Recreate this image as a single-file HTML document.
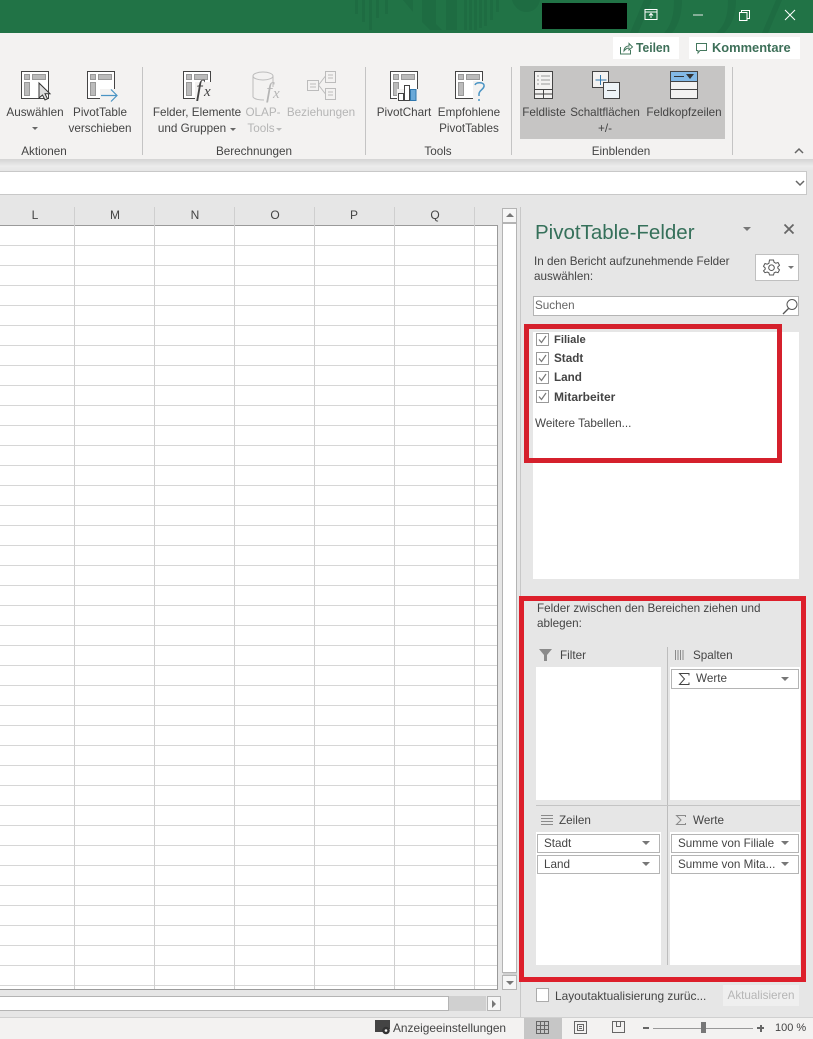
<!DOCTYPE html>
<html lang="de"><head><meta charset="utf-8"><title>PivotTable-Felder</title>
<style>
html,body{margin:0;padding:0}
body{width:813px;height:1039px;position:relative;overflow:hidden;background:#e6e6e6;font-family:"Liberation Sans",sans-serif;color:#444}
div,svg,span.t{position:absolute}
.t{white-space:nowrap;font-size:11.7px;line-height:14px;color:#444}
.c{transform:translateX(-50%)}
.dis{color:#b5b5b5}
.g{font-size:11.7px}
.f{background:#fff;border:1px solid #b4b4b4;box-sizing:border-box}
.tri{width:0;height:0;border-left:4px solid transparent;border-right:4px solid transparent;border-top:4px solid #777}
.w{background:#fff}
svg{overflow:visible}
</style></head><body>

<!-- title bar -->
<div style="left:0;top:0;width:813px;height:33px;background:#217346"></div>
<svg style="left:0;top:0" width="813" height="33" fill="#1e6c42">
<rect x="355" y="0" width="3" height="14"/><rect x="362" y="0" width="3" height="22"/><rect x="369" y="0" width="3" height="30"/><rect x="376" y="0" width="3" height="18"/><rect x="385" y="0" width="3" height="14"/>
<path d="M403 0l10 12V0zM422 0h14v24l6 6h-12l-8-8zM446 0h11v30h-11z"/>
<rect x="464" y="0" width="3" height="30"/><rect x="469" y="0" width="3" height="30"/><rect x="474" y="0" width="3" height="30"/><rect x="479" y="0" width="3" height="28"/><rect x="484" y="0" width="3" height="26"/><rect x="490" y="0" width="3" height="20"/><rect x="496" y="0" width="3" height="12"/>
<path d="M512 0h28c-2 9-8 12-14 12s-12-5-14-12zM630 33l14-33h8l-14 33zM664 33c8-8 10-20 10-33h8c0 13-3 25-10 33zM716 33c10-8 12-20 12-33h8c0 14-4 25-12 33zM762 33l14-33h6l-14 33z"/></svg>
<div style="left:542px;top:3px;width:85px;height:26px;background:#000"></div>
<svg style="left:644px;top:9px" width="14" height="12" fill="none" stroke="#fff"><path d="M1 .5h12v10H1zM1 3h12M7 9V4.500M5 6.500l2-2 2 2"/></svg>
<svg style="left:692px;top:14px" width="12" height="2"><path d="M1 1h10" stroke="#e8e8e8"/></svg>
<svg style="left:739px;top:10px" width="11" height="11" fill="none" stroke="#fff"><path d="M.5 2.500h7.500v8H.5zM2.500 2.500V.5h8v8H8"/></svg>
<svg style="left:784px;top:9px" width="12" height="12" fill="none" stroke="#fff"><path d="M1 1l10 10M11 1L1 11"/></svg>

<!-- ribbon -->
<div style="left:0;top:33px;width:813px;height:126px;background:#f3f2f1"></div>
<div style="left:0;top:159px;width:813px;height:12px;background:linear-gradient(#d4d4d4,#ececec 60%,#e6e6e6)"></div>
<div style="left:520px;top:66px;width:205px;height:73px;background:#c6c5c4"></div>
<div style="left:142px;top:67px;width:1px;height:88px;background:#c4c4c4"></div>
<div style="left:365px;top:67px;width:1px;height:88px;background:#c4c4c4"></div>
<div style="left:511px;top:67px;width:1px;height:88px;background:#c4c4c4"></div>
<div style="left:732px;top:67px;width:1px;height:88px;background:#c4c4c4"></div>

<div class="w" style="left:613px;top:37px;width:66px;height:22px"></div>
<div class="w" style="left:689px;top:37px;width:111px;height:22px"></div>
<svg style="left:620px;top:42px" width="13" height="13" fill="none" stroke="#44785e"><path d="M.5 5v7h10V8M4 9c0-3 2-5 5-5V1.500l3.500 3.500L9 8V6C7 6 5.500 7 4 9z"/></svg>
<span class="t" style="left:636px;top:41px;font-size:13px;font-weight:bold;color:#3d6f58;transform:scaleX(.93);transform-origin:left">Teilen</span>
<svg style="left:696px;top:43px" width="12" height="12" fill="none" stroke="#44785e"><path d="M.5.500h10v7H4L2 10V7.500H.5z"/></svg>
<span class="t" style="left:712px;top:41px;font-size:13px;font-weight:bold;color:#3d6f58;transform:scaleX(.99);transform-origin:left">Kommentare</span>

<!-- ribbon icons -->
<svg style="left:21px;top:71px" width="29" height="30">
<rect x=".5" y=".5" width="27" height="27" fill="#fff" stroke="#444"/><rect x="3.500" y="3.500" width="5" height="5" fill="#bbb" stroke="#999"/><rect x="11.500" y="3.500" width="13" height="5" fill="#bbb" stroke="#999"/><rect x="3.500" y="11.500" width="5" height="13" fill="#bbb" stroke="#999"/>
<path d="M18 12v15l3.500-3 2.500 5 2.500-1.200-2.500-5h5z" fill="#ddd" stroke="#333"/></svg>
<svg style="left:87px;top:71px" width="32" height="30">
<rect x=".5" y=".5" width="27" height="27" fill="#fff" stroke="#444"/><rect x="3.500" y="3.500" width="5" height="5" fill="#bbb" stroke="#999"/><rect x="11.500" y="3.500" width="13" height="5" fill="#bbb" stroke="#999"/><rect x="3.500" y="11.500" width="5" height="13" fill="#bbb" stroke="#999"/>
<rect x="13" y="18" width="18" height="12" fill="#f3f2f1"/><path d="M14 24.500h16M24 18.500l6 6-6 6" fill="none" stroke="#4a94c4" stroke-width="1.200"/></svg>
<svg style="left:183px;top:71px" width="30" height="30">
<rect x=".5" y=".5" width="27" height="27" fill="#fff" stroke="#444"/><rect x="3.500" y="3.500" width="5" height="5" fill="#bbb" stroke="#999"/><rect x="11.500" y="3.500" width="13" height="5" fill="#bbb" stroke="#999"/><rect x="3.500" y="11.500" width="5" height="13" fill="#bbb" stroke="#999"/>
<rect x="12" y="11" width="17" height="18" fill="#f3f2f1"/><text x="13" y="25" font-family="Liberation Serif" font-style="italic" font-size="23" fill="#444">f</text><text x="21" y="25" font-family="Liberation Serif" font-style="italic" font-size="15" fill="#444">x</text></svg>
<svg style="left:252px;top:71px" width="30" height="30">
<path d="M1 5v21c2 3 8 3 11 3M21 5v11" fill="none" stroke="#bcbcbc"/><ellipse cx="11" cy="5" rx="10" ry="4" fill="#f3f2f1" stroke="#bcbcbc"/><text x="14" y="27" font-family="Liberation Serif" font-style="italic" font-size="22" fill="#b5b5b5">f</text><text x="21" y="27" font-family="Liberation Serif" font-style="italic" font-size="15" fill="#b5b5b5">x</text></svg>
<svg style="left:307px;top:71px" width="29" height="29" fill="#f3f2f1" stroke="#bcbcbc">
<rect x=".5" y="9.500" width="11" height="10"/><rect x="18.500" y=".5" width="10" height="11"/><rect x="18.500" y="17.500" width="10" height="11"/><path d="M11.500 14l7-9M11.500 14l7 9M3 13h6M3 16h6M21 4h5M21 7h5M21 21h5M21 24h5" fill="none"/></svg>
<svg style="left:390px;top:71px" width="30" height="30">
<rect x=".5" y=".5" width="27" height="27" fill="#fff" stroke="#444"/><rect x="3.500" y="3.500" width="5" height="5" fill="#bbb" stroke="#999"/><rect x="11.500" y="3.500" width="13" height="5" fill="#bbb" stroke="#999"/><rect x="3.500" y="11.500" width="5" height="13" fill="#bbb" stroke="#999"/>
<rect x="7" y="18" width="22" height="12" fill="#f3f2f1"/><rect x="8.500" y="22.500" width="5" height="7" fill="#fff" stroke="#444"/><rect x="14.500" y="14.500" width="5" height="15" fill="#fff" stroke="#444"/><rect x="20.500" y="18.500" width="5.500" height="11" fill="#6aa9d8" stroke="#2f77ad"/></svg>
<svg style="left:455px;top:71px" width="32" height="32">
<rect x=".5" y=".5" width="27" height="27" fill="#fff" stroke="#444"/><rect x="3.500" y="3.500" width="5" height="5" fill="#bbb" stroke="#999"/><rect x="11.500" y="3.500" width="13" height="5" fill="#bbb" stroke="#999"/><rect x="3.500" y="11.500" width="5" height="13" fill="#bbb" stroke="#999"/>
<rect x="18" y="10" width="12" height="22" fill="#f3f2f1"/><path d="M20 14c1-3 8-3 9 0 1 4-5 5-5 9v2M24 28v2" fill="none" stroke="#4a94c4" stroke-width="1.500"/></svg>
<svg style="left:534px;top:71px" width="20" height="28">
<rect x=".5" y=".5" width="18" height="27" fill="#f3f2f1" stroke="#444"/><path d="M.5 18.500h18M.5 23h18M9.500 18.500v9" stroke="#444"/><path d="M7 5h9M7 9h9M7 13h9" stroke="#999"/><path d="M3 5h2M3 9h2M3 13h2" stroke="#999"/></svg>
<svg style="left:592px;top:71px" width="29" height="29">
<rect x=".5" y=".5" width="16" height="16" fill="#f3f2f1" stroke="#444"/><path d="M8.500 4v10M3.500 9h11" stroke="#2f77ad"/>
<rect x="11.500" y="11.500" width="16" height="16" fill="#eef4f8" stroke="#444"/><path d="M15 19.500h9" stroke="#555"/></svg>
<svg style="left:670px;top:71px" width="29" height="29">
<rect x=".5" y=".5" width="27" height="27" fill="#f3f2f1" stroke="#444"/><rect x="1" y="1" width="26" height="9" fill="#83b9e6"/><path d="M.5 10.500h27M.5 18.500h27" stroke="#444"/><path d="M4 5.500h10" stroke="#333"/><path d="M16 3h8l-4 5z" fill="#333"/></svg>

<!-- ribbon text -->
<span class="t c" style="left:35px;top:106px">Auswählen</span>
<div class="tri" style="left:32px;top:127px;border-width:3px 3px 0;border-top-color:#666"></div>
<span class="t c" style="left:100px;top:106px">PivotTable</span><span class="t c" style="left:100px;top:122px">verschieben</span>
<span class="t c g" style="left:44px;top:145px">Aktionen</span>
<span class="t c" style="left:197px;top:106px">Felder, Elemente</span><span class="t c" style="left:192px;top:122px">und Gruppen</span>
<div class="tri" style="left:230px;top:128px;border-width:3px 3px 0;border-top-color:#666"></div>
<span class="t c dis" style="left:263px;top:106px">OLAP-</span><span class="t c dis" style="left:261px;top:122px">Tools</span>
<div class="tri" style="left:276px;top:128px;border-width:3px 3px 0;border-top-color:#bbb"></div>
<span class="t c dis" style="left:321px;top:106px">Beziehungen</span>
<span class="t c g" style="left:254px;top:145px">Berechnungen</span>
<span class="t c" style="left:404px;top:106px">PivotChart</span>
<span class="t c" style="left:469px;top:106px">Empfohlene</span><span class="t c" style="left:469px;top:122px">PivotTables</span>
<span class="t c g" style="left:438px;top:145px">Tools</span>
<span class="t c" style="left:544px;top:106px">Feldliste</span>
<span class="t c" style="left:605px;top:106px;font-size:11.600px">Schaltflächen</span><span class="t c" style="left:605px;top:122px">+/-</span>
<span class="t c" style="left:684px;top:106px;font-size:11.700px">Feldkopfzeilen</span>
<span class="t c g" style="left:621px;top:145px">Einblenden</span>
<svg style="left:794px;top:148px" width="10" height="6" fill="none" stroke="#666" stroke-width="1.500"><path d="M1 5l4-4 4 4"/></svg>

<!-- formula bar -->
<div style="left:-2px;top:171px;width:809px;height:24px;background:#fff;border:1px solid #c8c8c8;box-sizing:border-box"></div>
<svg style="left:795px;top:180px" width="10" height="6" fill="none" stroke="#666" stroke-width="1.500"><path d="M1 1l4 4 4-4"/></svg>

<!-- sheet -->
<div style="left:0;top:226px;width:498px;height:764px;background-color:#fff;background-image:repeating-linear-gradient(to bottom,transparent 0,transparent 19px,#d6d6d6 19px,#d6d6d6 20px);border-right:1px solid #9a9a9a;border-bottom:1px solid #9a9a9a;box-sizing:border-box"></div>
<div style="left:0;top:207px;width:498px;height:19px;background:#e6e6e6;border-bottom:1px solid #9a9a9a;box-sizing:border-box"></div>
<div style="left:74px;top:207px;width:1px;height:782px;background:#cfcfcf"></div>
<div style="left:154px;top:207px;width:1px;height:782px;background:#cfcfcf"></div>
<div style="left:234px;top:207px;width:1px;height:782px;background:#cfcfcf"></div>
<div style="left:314px;top:207px;width:1px;height:782px;background:#cfcfcf"></div>
<div style="left:394px;top:207px;width:1px;height:782px;background:#cfcfcf"></div>
<div style="left:474px;top:207px;width:1px;height:782px;background:#cfcfcf"></div>
<span class="t c" style="left:35px;top:208px;font-size:12px">L</span>
<span class="t c" style="left:115px;top:208px;font-size:12px">M</span>
<span class="t c" style="left:195px;top:208px;font-size:12px">N</span>
<span class="t c" style="left:275px;top:208px;font-size:12px">O</span>
<span class="t c" style="left:354px;top:208px;font-size:12px">P</span>
<span class="t c" style="left:435px;top:208px;font-size:12px">Q</span>

<!-- vertical scrollbar -->
<div style="left:502px;top:208px;width:15px;height:15px;background:#f6f6f6;border:1px solid #b4b4b4;box-sizing:border-box"></div>
<div style="left:506px;top:213px;width:0;height:0;border-left:4px solid transparent;border-right:4px solid transparent;border-bottom:4px solid #777"></div>
<div style="left:502px;top:223px;width:15px;height:750px;background:#fff;border:1px solid #b4b4b4;box-sizing:border-box"></div>
<div style="left:503px;top:973px;width:14px;height:5px;background:#d0d0d0"></div>
<div style="left:502px;top:975px;width:15px;height:15px;background:#f6f6f6;border:1px solid #b4b4b4;box-sizing:border-box"></div>
<div class="tri" style="left:506px;top:981px"></div>

<!-- horizontal scrollbar -->
<div style="left:0;top:996px;width:449px;height:15px;background:#fff;border:1px solid #b4b4b4;border-left:0;box-sizing:border-box"></div>
<div style="left:449px;top:996px;width:37px;height:15px;background:#d0d0d0"></div>
<div style="left:487px;top:996px;width:14px;height:15px;background:#f6f6f6;border:1px solid #b4b4b4;box-sizing:border-box"></div>
<div style="left:492px;top:1000px;width:0;height:0;border-top:4px solid transparent;border-bottom:4px solid transparent;border-left:4px solid #777"></div>

<!-- panel -->
<div style="left:520px;top:207px;width:1px;height:810px;background:#c8c8c8"></div>
<span class="t" style="left:535px;top:220px;font-size:20.500px;line-height:25px;color:#35705a">PivotTable-Felder</span>
<div class="tri" style="left:743px;top:227px"></div>
<svg style="left:784px;top:224px" width="10" height="10" fill="none" stroke="#666" stroke-width="1.800"><path d="M.5.500l9 9M9.500.5l-9 9"/></svg>
<span class="t" style="left:534px;top:255px">In den Bericht aufzunehmende Felder</span>
<span class="t" style="left:534px;top:270px">auswählen:</span>
<div class="w" style="left:755px;top:254px;width:44px;height:27px;border:1px solid #c0c0c0;box-sizing:border-box"></div>
<svg style="left:763px;top:259px" width="17" height="17" fill="none" stroke="#555"><path d="M6.500 1h4l.6 2.300 1.700.9 2.200-.7 1.500 2.800-1.700 1.700v1.200l1.700 1.700-1.500 2.800-2.200-.7-1.700.9-.6 2.100h-4l-.6-2.100-1.700-.9-2.200.7L.5 11.900l1.700-1.700V9L.5 7.300 2 4.500l2.200.7 1.700-.9z"/><circle cx="8.500" cy="8.700" r="2.800"/></svg>
<div class="tri" style="left:788px;top:266px;border-width:3px 3.500px 0"></div>
<div class="f" style="left:533px;top:296px;width:266px;height:20px"></div>
<span class="t" style="left:535px;top:299px;color:#666">Suchen</span>
<svg style="left:782px;top:298px" width="16" height="17" fill="none" stroke="#555"><circle cx="10" cy="6.500" r="5"/><path d="M6.500 10.500L1 16" stroke-width="1.300"/></svg>

<div class="w" style="left:533px;top:332px;width:266px;height:247px"></div>
<svg style="left:536px;top:333px" width="13" height="70" fill="#fff" stroke="#999">
<rect x=".5" y=".5" width="12" height="12"/><rect x=".5" y="19.500" width="12" height="12"/><rect x=".5" y="38.500" width="12" height="12"/><rect x=".5" y="57.500" width="12" height="12"/>
<g fill="none" stroke="#777" stroke-width="1.200"><path d="M3 6.500l2.500 3L10 3M3 25.500l2.500 3L10 22M3 44.500l2.500 3L10 41M3 63.500l2.500 3L10 60"/></g></svg>
<span class="t" style="left:554px;top:333px;font-weight:bold;font-size:11.200px">Filiale</span>
<span class="t" style="left:554px;top:352px;font-weight:bold">Stadt</span>
<span class="t" style="left:554px;top:371px;font-weight:bold">Land</span>
<span class="t" style="left:554px;top:390px;font-weight:bold;font-size:12px">Mitarbeiter</span>
<span class="t" style="left:535px;top:417px">Weitere Tabellen...</span>
<div style="left:524px;top:324px;width:258px;height:139px;border:5px solid #d5202c;box-sizing:border-box"></div>

<span class="t" style="left:537px;top:602px">Felder zwischen den Bereichen ziehen und</span>
<span class="t" style="left:537px;top:617px">ablegen:</span>
<div style="left:667px;top:647px;width:1px;height:318px;background:#bdbdbd"></div>
<div style="left:536px;top:805px;width:264px;height:1px;background:#c4c4c4"></div>
<svg style="left:539px;top:649px" width="13" height="12" fill="#8a8a8a"><path d="M0 0h13L8 6v6H5V6z"/></svg>
<span class="t" style="left:560px;top:649px">Filter</span>
<svg style="left:675px;top:650px" width="10" height="10" stroke="#8a8a8a"><path d="M.5 0v10M3 0v10M5.500 0v10M8 0v10"/></svg>
<span class="t" style="left:693px;top:649px">Spalten</span>
<svg style="left:541px;top:815px" width="12" height="10" stroke="#8a8a8a"><path d="M0 .5h12M0 3.500h12M0 6.500h12M0 9.500h12"/></svg>
<span class="t" style="left:559px;top:814px">Zeilen</span>
<svg style="left:676px;top:815px" width="10" height="10" fill="none" stroke="#8a8a8a"><path d="M9.500 2V.5h-9L5 5 .5 9.500h9V8"/></svg>
<span class="t" style="left:693px;top:814px">Werte</span>

<div class="w" style="left:536px;top:667px;width:125px;height:133px"></div>
<div class="w" style="left:670px;top:667px;width:130px;height:133px"></div>
<div class="w" style="left:536px;top:832px;width:125px;height:133px"></div>
<div class="w" style="left:670px;top:832px;width:130px;height:133px"></div>

<div class="f" style="left:671px;top:669px;width:128px;height:20px"></div>
<svg style="left:679px;top:673px" width="11" height="12" fill="none" stroke="#444"><path d="M10 2.500V.5H.5L5.500 6 .5 11.500H10V9.500"/></svg>
<span class="t" style="left:696px;top:672px">Werte</span><div class="tri" style="left:781px;top:677px"></div>
<div class="f" style="left:537px;top:834px;width:123px;height:19px"></div>
<span class="t" style="left:544px;top:837px">Stadt</span><div class="tri" style="left:642px;top:841px"></div>
<div class="f" style="left:537px;top:855px;width:123px;height:19px"></div>
<span class="t" style="left:544px;top:858px">Land</span><div class="tri" style="left:642px;top:862px"></div>
<div class="f" style="left:671px;top:834px;width:128px;height:19px"></div>
<span class="t" style="left:678px;top:837px">Summe von Filiale</span><div class="tri" style="left:781px;top:841px"></div>
<div class="f" style="left:671px;top:855px;width:128px;height:19px"></div>
<span class="t" style="left:678px;top:858px">Summe von Mita...</span><div class="tri" style="left:781px;top:862px"></div>

<div style="left:519px;top:596px;width:287px;height:386px;border:5px solid #dd1f2b;box-sizing:border-box"></div>

<div class="w" style="left:536px;top:988px;width:13px;height:14px;border:1px solid #ababab;box-sizing:border-box"></div>
<span class="t" style="left:555px;top:989px;font-size:11.900px">Layoutaktualisierung zurüc...</span>
<div style="left:723px;top:985px;width:76px;height:21px;background:#efefef"></div>
<span class="t c dis" style="left:761px;top:989px;font-size:11.700px">Aktualisieren</span>

<!-- status bar -->
<div style="left:0;top:1017px;width:813px;height:22px;background:#f3f2f1;border-top:1px solid #d0d0d0;box-sizing:border-box"></div>
<svg style="left:375px;top:1020px" width="16" height="15"><path d="M0 0h15v9H9v3H0z" fill="#444"/><circle cx="11" cy="10.500" r="3.800" fill="#333"/><circle cx="11" cy="10.500" r="1.300" fill="#f3f2f1"/></svg>
<span class="t" style="left:393px;top:1021px;font-size:11.900px">Anzeigeeinstellungen</span>
<div style="left:524px;top:1018px;width:38px;height:21px;background:#c6c6c6"></div>
<svg style="left:536px;top:1021px" width="13" height="13" fill="none" stroke="#666"><path d="M.5.500h12v12H.5zM4.500.5v12M8.500.5v12M.5 4.500h12M.5 8.500h12"/></svg>
<svg style="left:574px;top:1021px" width="14" height="14" fill="none" stroke="#666"><path d="M.5.500h12v12H.5zM3.500 3.500h6v6h-6zM5 5.500h3M5 7.500h3"/></svg>
<svg style="left:612px;top:1021px" width="14" height="13" fill="none" stroke="#666"><path d="M.5.500h12v11H.5zM4.500.5v5h4v-5"/></svg>
<div style="left:643px;top:1027px;width:6px;height:2px;background:#666"></div>
<div style="left:653px;top:1028px;width:100px;height:1px;background:#999"></div>
<div style="left:701px;top:1022px;width:5px;height:11px;background:#777"></div>
<div style="left:757px;top:1027px;width:7px;height:2px;background:#666"></div><div style="left:759.500px;top:1024.500px;width:2px;height:7px;background:#666"></div>
<span class="t" style="left:775px;top:1021px;font-size:11px">100 %</span>
</body></html>
